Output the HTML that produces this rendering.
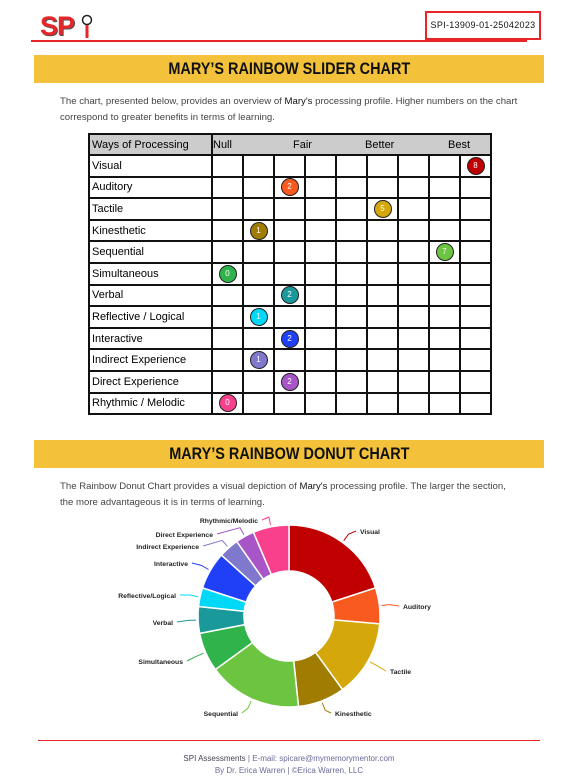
<!DOCTYPE html>
<html><head><meta charset="utf-8"><style>
body{margin:0;width:578px;height:782px;background:#fff;font-family:"Liberation Sans",sans-serif;position:relative;overflow:hidden}
.abs{position:absolute}
.band{position:absolute;left:34px;width:510px;height:28px;background:#f3c13a;text-align:center;font-weight:bold;font-size:17px;line-height:28px;color:#111}
.band span{display:inline-block;transform:scaleX(0.85)}
.p{position:absolute;left:60px;width:460px;font-size:9.6px;line-height:16px;color:#444}
.p b{color:#111;font-weight:normal}
table{position:absolute;left:88px;top:133px;border-collapse:collapse;font-size:11px;table-layout:fixed;width:404px}
td{border:2px solid #111;padding:0;text-align:center;position:relative;overflow:visible}
td.l{text-align:left;padding-left:2px;white-space:nowrap}
tr{height:21.6px}
tr.h{height:21px}
tr.h td{background:#ccc}
.d{display:inline-block;width:16px;height:16px;border-radius:50%;border:1px solid #222;color:#fff;font-size:8px;line-height:16px;text-align:center;vertical-align:middle}
.hl{position:absolute;top:4px}
</style></head><body>
<div class="abs" style="left:40px;top:11px;font-size:27px;font-weight:bold;color:#e8262a;letter-spacing:-1px;text-shadow:1px 1px 0 #555">SP</div>
<svg class="abs" style="left:80px;top:14px" width="14" height="26"><circle cx="7" cy="6" r="4.5" fill="none" stroke="#222" stroke-width="1.5"/><rect x="5.5" y="11" width="3" height="13" fill="#e8262a"/></svg>
<div class="abs" style="left:31px;top:40px;width:496px;height:2px;background:#e8262a"></div>
<div class="abs" style="left:425px;top:11px;width:116px;height:29px;border:2px solid #e8262a;box-sizing:border-box;font-size:9px;line-height:25px;text-align:center;letter-spacing:0.3px;color:#111;white-space:nowrap;background:#fff">SPI-13909-01-25042023</div>
<div class="band" style="top:55px"><span>MARY’S RAINBOW SLIDER CHART</span></div>
<div class="p" style="top:94px">The chart, presented below, provides an overview of <b>Mary's</b> processing profile. Higher numbers on the chart correspond to greater benefits in terms of learning.</div>
<table id="t"></table>
<div class="band" style="top:440px"><span>MARY’S RAINBOW DONUT CHART</span></div>
<div class="p" style="top:479px">The Rainbow Donut Chart provides a visual depiction of <b>Mary's</b> processing profile. The larger the section, the more advantageous it is in terms of learning.</div>
<svg id="dn" class="abs" style="left:0;top:0" width="578" height="740"></svg>
<div class="abs" style="left:38px;top:740px;width:502px;height:1px;background:#e8262a"></div>
<div class="abs" style="left:0;top:753px;width:578px;text-align:center;font-size:8px;line-height:12px;color:#6a6a9a"><span style="color:#445">SPI Assessments</span> | E-mail: spicare@mymemorymentor.com<br>By Dr. Erica Warren | ©Erica Warren, LLC</div>
<script>
var rows=[["Visual",8,"#c00000"],["Auditory",2,"#f95a20"],["Tactile",5,"#d4a80a"],["Kinesthetic",1,"#a07c00"],["Sequential",7,"#6cc440"],["Simultaneous",0,"#30b34a"],["Verbal",2,"#199999"],["Reflective / Logical",1,"#00d8f8"],["Interactive",2,"#2040f8"],["Indirect Experience",1,"#8078cc"],["Direct Experience",2,"#a855c8"],["Rhythmic / Melodic",0,"#f8408c"]];
var h='<colgroup><col style="width:123px">';for(var i=0;i<9;i++)h+='<col style="width:31px">';h+='</colgroup>';
h+='<tr class="h"><td class="l">Ways of Processing</td><td colspan="9" style="text-align:left"><span class="hl" style="left:0">Null</span><span class="hl" style="left:80px">Fair</span><span class="hl" style="left:152px">Better</span><span class="hl" style="left:235px">Best</span>&nbsp;</td></tr>';
rows.forEach(function(r){h+='<tr><td class="l">'+r[0]+'</td>';for(var i=0;i<9;i++)h+='<td>'+(i==r[1]?'<span class="d" style="background:'+r[2]+'">'+r[1]+'</span>':'')+'</td>';h+='</tr>';});
document.getElementById('t').innerHTML=h;
var ends=[0,72,95,144,174,234,259,276,288,312,325,337,360];
var cx=289,cy=616,R=91,r=45,s='';
function pt(a,rad){a=(a-90)*Math.PI/180;return (cx+rad*Math.cos(a)).toFixed(1)+','+(cy+rad*Math.sin(a)).toFixed(1);}
for(var i=0;i<12;i++){var a=ends[i],b=ends[i+1],lg=(b-a)>180?1:0;
s+='<path d="M'+pt(a,R)+' A'+R+','+R+' 0 '+lg+' 1 '+pt(b,R)+' L'+pt(b,r)+' A'+r+','+r+' 0 '+lg+' 0 '+pt(a,r)+'Z" fill="'+rows[i][2]+'" stroke="#fff" stroke-width="1.5"/>';}
var labs=[["Visual",360,534,"start"],["Auditory",403,609,"start"],["Tactile",390,674,"start"],["Kinesthetic",335,716,"start"],["Sequential",238,716,"end"],["Simultaneous",183,664,"end"],["Verbal",173,625,"end"],["Reflective/Logical",176,598,"end"],["Interactive",188,566,"end"],["Indirect Experience",199,549,"end"],["Direct Experience",213,537,"end"],["Rhythmic/Melodic",258,523,"end"]];
labs.forEach(function(l,i){var m=(ends[i]+ends[i+1])/2,p1=pt(m,R+2),p2=pt(m,R+10);var lx=l[3]=="start"?l[1]-4:l[1]+4;
s+='<polyline points="'+p1+' '+p2+' '+lx+','+(l[2]-3)+'" fill="none" stroke="'+rows[i][2]+'" stroke-width="1"/>';
s+='<text x="'+l[1]+'" y="'+l[2]+'" font-size="6.8" font-weight="bold" fill="#222" text-anchor="'+l[3]+'">'+l[0]+'</text>';});
document.getElementById('dn').innerHTML=s;
</script>
</body></html>
